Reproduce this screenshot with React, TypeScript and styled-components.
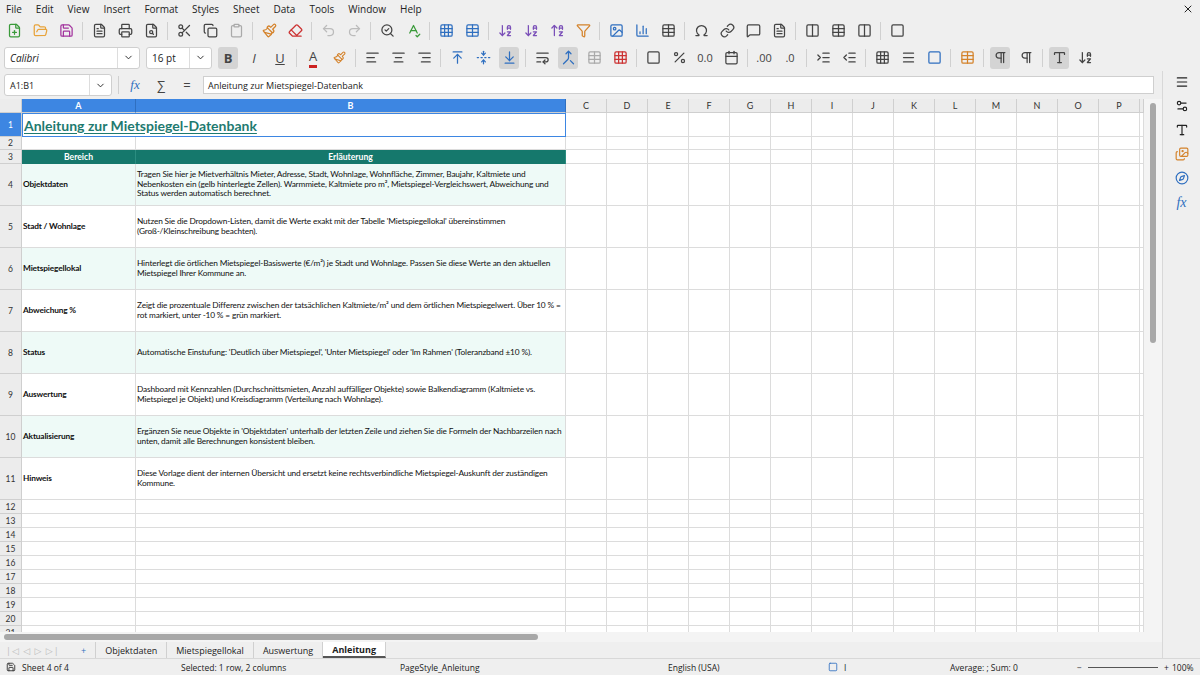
import React from "react";
import styled, { createGlobalStyle } from "styled-components";
import {
  FilePlus, FolderOpen, Save, FileText, Printer, FileSearch, Scissors, Copy, Clipboard,
  Paintbrush, Eraser, Undo2, Redo2, SearchCheck, SpellCheck, Grid3x3, Table, ArrowDownAZ,
  ArrowUpAZ, Filter, Image, BarChart3, Omega, Link, MessageSquare, Columns2,
  AlignLeft, AlignCenter, AlignRight, ArrowUpToLine, FoldVertical, ArrowDownToLine,
  WrapText, Merge, Percent, Calendar, IndentIncrease, IndentDecrease, Square, Menu,
  Settings2, Type, Images, Compass, X, ChevronDown, Pilcrow,
} from "lucide-react";

const Global = createGlobalStyle`
  body { margin: 0; font-family: "Open Sans", "DejaVu Sans", sans-serif; background: #efefef; }
  * { box-sizing: border-box; }
`;

const Window = styled.div`
  width: 1200px; height: 675px; display: flex; flex-direction: column; overflow: hidden;
  background: #efefef; color: #222;
`;
const MenuBar = styled.div`
  height: 17px; display: flex; align-items: center; padding: 0 6px; gap: 14px; font-size: 10px;
`;
const Close = styled.span` margin-left: auto; display: flex; `;
const ToolRow = styled.div`
  height: 27px; display: flex; align-items: center; padding: 0 4px; gap: 6px;
`;
const Tool = styled.span<{ $active?: boolean; $c?: string }>`
  width: 20px; height: 22px; display: inline-flex; align-items: center; justify-content: center;
  border-radius: 3px; color: ${(p) => p.$c || "#444"};
  background: ${(p) => (p.$active ? "#d4d4d4" : "transparent")};
  font-size: 13px;
`;
const Sep = styled.span` width: 1px; height: 18px; background: #d0d0d0; `;
const Combo = styled.div<{ $w: number }>`
  width: ${(p) => p.$w}px; height: 22px; background: #fff; border: 1px solid #cfcfcf; border-radius: 3px;
  display: flex; align-items: center; font-size: 10px; padding-left: 5px; justify-content: space-between;
  font-style: ${(p) => (p.$w > 120 ? "italic" : "normal")};
`;
const ComboArrow = styled.span`
  width: 22px; height: 100%; border-left: 1px solid #ddd; display: flex; align-items: center; justify-content: center;
`;
const FormulaRow = styled.div`
  height: 28px; display: flex; align-items: center; padding: 0 4px; gap: 6px; margin-right: 42px;
`;
const FormulaInput = styled.div`
  flex: 1; height: 18px; background: #fff; border: 1px solid #cfcfcf; font-size: 9px;
  display: flex; align-items: center; padding-left: 4px;
`;
const Main = styled.div` flex: 1; display: flex; min-height: 0; `;
const SheetArea = styled.div` flex: 1; display: flex; flex-direction: column; min-width: 0; `;
const GridWrap = styled.div` flex: 1; display: flex; min-height: 0; `;
const Grid = styled.div`
  flex: 1; display: grid; overflow: hidden; background: #fff;
  grid-template-columns: 22px 114px 430px repeat(14, 41px) 1fr;
  grid-auto-rows: 14px;
  grid-template-rows: 14px 24px 13px 14px repeat(8, 42px);
  font-family: Lato, "Open Sans", sans-serif;
`;
const ColHead = styled.div<{ $sel?: boolean }>`
  background: ${(p) => (p.$sel ? "#3d86e2" : "#ececec")}; color: ${(p) => (p.$sel ? "#fff" : "#333")};
  font-size: 9px; font-weight: ${(p) => (p.$sel ? 700 : 400)}; display: flex; align-items: center; justify-content: center;
  border-right: 1px solid ${(p) => (p.$sel ? "#2f6fc0" : "#cfcfcf")}; border-bottom: 1px solid #cfcfcf;
`;
const RowHead = styled.div<{ $sel?: boolean }>`
  background: ${(p) => (p.$sel ? "#3d86e2" : "#ececec")}; color: ${(p) => (p.$sel ? "#fff" : "#333")};
  font-size: 8.5px; display: flex; align-items: center; justify-content: center;
  border-bottom: 1px solid #cfcfcf; border-right: 1px solid #cfcfcf;
`;
const Cell = styled.div<{ $bg?: string }>`
  background: ${(p) => p.$bg || "#fff"}; border-right: 1px solid #dcdcdc; border-bottom: 1px solid #dcdcdc;
  font-size: 8.3px; letter-spacing: -0.15px; line-height: 9.5px; display: flex; align-items: center; padding: 0 1px; overflow: hidden;
  color: #111;
`;
const Title = styled.div`
  grid-column: 2 / 4; border: 1px solid #3d86e2; font-size: 14px; font-weight: 700; color: #1e7a70;
  text-decoration: underline; text-underline-offset: 2px; display: flex; align-items: center; padding-left: 1px;
`;
const HeadCell = styled.div`
  background: #15786c; color: #fff; font-size: 8.6px; font-weight: 700; display: flex; align-items: center;
  justify-content: center; border-right: 1px solid #2b8d80;
`;
const Label = styled.span` font-weight: 700; `;
const VScroll = styled.div`
  width: 18px; background: #f4f4f4; display: flex; justify-content: center; padding-top: 4px;
`;
const VThumb = styled.div` width: 6px; height: 240px; background: #a8a8a8; border-radius: 3px; `;
const HScroll = styled.div` height: 10px; background: #f4f4f4; padding: 2px 0 2px 4px; `;
const HThumb = styled.div` width: 534px; height: 6px; background: #a8a8a8; border-radius: 3px; `;
const Tabs = styled.div`
  height: 16px; display: flex; align-items: center; font-size: 9px; background: #efefef; padding-left: 6px;
`;
const TabNav = styled.span` color: #bbb; font-size: 9px; width: 66px; letter-spacing: 1px; `;
const Tab = styled.span<{ $active?: boolean }>`
  padding: 0 9px; height: 100%; display: flex; align-items: center; border-right: 1px solid #d0d0d0;
  font-weight: ${(p) => (p.$active ? 700 : 400)};
  border-bottom: ${(p) => (p.$active ? "2px solid #555" : "none")};
  background: ${(p) => (p.$active ? "#fff" : "transparent")};
`;
const Sidebar = styled.div`
  width: 38px; border-left: 1px solid #d8d8d8; display: flex; flex-direction: column; align-items: center;
  gap: 10px; padding-top: 4px; margin-top: -28px;
`;
const Status = styled.div`
  height: 17px; display: flex; align-items: center; font-size: 8.5px; border-top: 1px solid #d8d8d8; padding: 0 6px;
`;
const StatusCell = styled.span<{ $w: number }>` width: ${(p) => p.$w}px; display: flex; align-items: center; gap: 6px; flex-shrink: 0; `;

const cols = ["C", "D", "E", "F", "G", "H", "I", "J", "K", "L", "M", "N", "O", "P"];
const rows: [string, string][] = [
  ["Objektdaten", "Tragen Sie hier je Mietverhältnis Mieter, Adresse, Stadt, Wohnlage, Wohnfläche, Zimmer, Baujahr, Kaltmiete und Nebenkosten ein (gelb hinterlegte Zellen). Warmmiete, Kaltmiete pro m², Mietspiegel-Vergleichswert, Abweichung und Status werden automatisch berechnet."],
  ["Stadt / Wohnlage", "Nutzen Sie die Dropdown-Listen, damit die Werte exakt mit der Tabelle 'Mietspiegellokal' übereinstimmen (Groß-/Kleinschreibung beachten)."],
  ["Mietspiegellokal", "Hinterlegt die örtlichen Mietspiegel-Basiswerte (€/m²) je Stadt und Wohnlage. Passen Sie diese Werte an den aktuellen Mietspiegel Ihrer Kommune an."],
  ["Abweichung %", "Zeigt die prozentuale Differenz zwischen der tatsächlichen Kaltmiete/m² und dem örtlichen Mietspiegelwert. Über 10 % = rot markiert, unter -10 % = grün markiert."],
  ["Status", "Automatische Einstufung: 'Deutlich über Mietspiegel', 'Unter Mietspiegel' oder 'Im Rahmen' (Toleranzband ±10 %)."],
  ["Auswertung", "Dashboard mit Kennzahlen (Durchschnittsmieten, Anzahl auffälliger Objekte) sowie Balkendiagramm (Kaltmiete vs. Mietspiegel je Objekt) und Kreisdiagramm (Verteilung nach Wohnlage)."],
  ["Aktualisierung", "Ergänzen Sie neue Objekte in 'Objektdaten' unterhalb der letzten Zeile und ziehen Sie die Formeln der Nachbarzeilen nach unten, damit alle Berechnungen konsistent bleiben."],
  ["Hinweis", "Diese Vorlage dient der internen Übersicht und ersetzt keine rechtsverbindliche Mietspiegel-Auskunft der zuständigen Kommune."],
];

const I = 15;
const Blank = () => <>{cols.map((c) => <Cell key={c} />)}<Cell /></>;

export default function App() {
  return (
    <Window>
      <Global />
      <MenuBar>
        {["File", "Edit", "View", "Insert", "Format", "Styles", "Sheet", "Data", "Tools", "Window", "Help"].map((m) => <span key={m}>{m}</span>)}
        <Close><X size={12} /></Close>
      </MenuBar>
      <ToolRow>
        <Tool $c="#3a9a3a"><FilePlus size={I} /></Tool>
        <Tool $c="#e8a33a"><FolderOpen size={I} /></Tool>
        <Tool $c="#a3359e"><Save size={I} /></Tool>
        <Sep />
        <Tool><FileText size={I} /></Tool><Tool><Printer size={I} /></Tool><Tool><FileSearch size={I} /></Tool>
        <Sep />
        <Tool><Scissors size={I} /></Tool><Tool><Copy size={I} /></Tool><Tool $c="#aaa"><Clipboard size={I} /></Tool>
        <Sep />
        <Tool $c="#d4822a"><Paintbrush size={I} /></Tool><Tool $c="#c33"><Eraser size={I} /></Tool>
        <Sep />
        <Tool $c="#bbb"><Undo2 size={I} /></Tool><Tool $c="#bbb"><Redo2 size={I} /></Tool>
        <Sep />
        <Tool><SearchCheck size={I} /></Tool><Tool $c="#3a9a3a"><SpellCheck size={I} /></Tool>
        <Sep />
        <Tool $c="#2f6fc0"><Grid3x3 size={I} /></Tool><Tool $c="#2f6fc0"><Table size={I} /></Tool>
        <Sep />
        <Tool $c="#7a4fb8"><ArrowDownAZ size={I} /></Tool><Tool $c="#7a4fb8"><ArrowDownAZ size={I} /></Tool><Tool $c="#7a4fb8"><ArrowUpAZ size={I} /></Tool><Tool $c="#d4822a"><Filter size={I} /></Tool>
        <Sep />
        <Tool $c="#2f6fc0"><Image size={I} /></Tool><Tool $c="#2f6fc0"><BarChart3 size={I} /></Tool><Tool><Table size={I} /></Tool>
        <Sep />
        <Tool><Omega size={I} /></Tool><Tool><Link size={I} /></Tool><Tool><MessageSquare size={I} /></Tool><Tool><FileText size={I} /></Tool>
        <Sep />
        <Tool><Columns2 size={I} /></Tool><Tool><Table size={I} /></Tool><Tool><Columns2 size={I} /></Tool>
        <Sep /><Tool><Square size={I} /></Tool>
      </ToolRow>
      <ToolRow>
        <Combo $w={136}>Calibri<ComboArrow><ChevronDown size={11} /></ComboArrow></Combo>
        <Combo $w={66}>16 pt<ComboArrow><ChevronDown size={11} /></ComboArrow></Combo>
        <Tool $active><b>B</b></Tool><Tool><i>I</i></Tool><Tool><u>U</u></Tool>
        <Sep />
        <Tool $c="#c22"><span style={{ borderBottom: "3px solid #c22", color: "#444" }}>A</span></Tool>
        <Tool $c="#d4822a"><Paintbrush size={13} /></Tool>
        <Sep />
        <Tool><AlignLeft size={I} /></Tool><Tool><AlignCenter size={I} /></Tool><Tool><AlignRight size={I} /></Tool>
        <Sep />
        <Tool $c="#2f6fc0"><ArrowUpToLine size={I} /></Tool><Tool $c="#2f6fc0"><FoldVertical size={I} /></Tool><Tool $active $c="#2f6fc0"><ArrowDownToLine size={I} /></Tool>
        <Sep />
        <Tool><WrapText size={I} /></Tool><Tool $active $c="#2f6fc0"><Merge size={I} /></Tool><Tool $c="#aaa"><Table size={I} /></Tool><Tool $c="#c33"><Grid3x3 size={I} /></Tool>
        <Sep />
        <Tool><Square size={I} /></Tool><Tool><Percent size={I} /></Tool><Tool style={{ fontSize: 11 }}>0.0</Tool><Tool><Calendar size={I} /></Tool>
        <Sep />
        <Tool style={{ fontSize: 11 }}>.00</Tool><Tool style={{ fontSize: 11 }}>.0</Tool>
        <Sep />
        <Tool><IndentIncrease size={I} /></Tool><Tool><IndentDecrease size={I} /></Tool>
        <Sep />
        <Tool><Grid3x3 size={I} /></Tool><Tool><Menu size={I} /></Tool><Tool $c="#2f6fc0"><Square size={I} /></Tool>
        <Sep />
        <Tool $c="#d4822a"><Table size={I} /></Tool>
        <Sep />
        <Tool $active><Pilcrow size={I} /></Tool><Tool><Pilcrow size={I} /></Tool>
        <Sep />
        <Tool $active><Type size={I} /></Tool><Tool><ArrowDownAZ size={I} /></Tool>
      </ToolRow>
      <FormulaRow>
        <Combo $w={108} style={{ fontSize: 9 }}>A1:B1<ComboArrow><ChevronDown size={11} /></ComboArrow></Combo>
        <Sep />
        <Tool $c="#2f6fc0" style={{ fontStyle: "italic", fontFamily: "serif" }}>fx</Tool>
        <Tool>∑</Tool><Tool>=</Tool>
        <FormulaInput>Anleitung zur Mietspiegel-Datenbank</FormulaInput>
      </FormulaRow>
      <Main>
        <SheetArea>
          <GridWrap>
            <Grid>
              <ColHead />
              <ColHead $sel>A</ColHead>
              <ColHead $sel>B</ColHead>
              {cols.map((c) => <ColHead key={c}>{c}</ColHead>)}
              <ColHead />

              <RowHead $sel>1</RowHead>
              <Title>Anleitung zur Mietspiegel-Datenbank</Title>
              <Blank />

              <RowHead>2</RowHead><Cell /><Cell /><Blank />

              <RowHead>3</RowHead>
              <HeadCell>Bereich</HeadCell><HeadCell>Erläuterung</HeadCell>
              <Blank />

              {rows.map(([a, b], i) => {
                const bg = i % 2 === 0 ? "#eefaf7" : "#fff";
                return (
                  <React.Fragment key={a}>
                    <RowHead>{i + 4}</RowHead>
                    <Cell $bg={bg}><Label>{a}</Label></Cell>
                    <Cell $bg={bg}>{b}</Cell>
                    <Blank />
                  </React.Fragment>
                );
              })}
              {Array.from({ length: 10 }, (_, i) => (
                <React.Fragment key={i}>
                  <RowHead>{i + 12}</RowHead><Cell /><Cell /><Blank />
                </React.Fragment>
              ))}
            </Grid>
            <VScroll><VThumb /></VScroll>
          </GridWrap>
          <HScroll><HThumb /></HScroll>
          <Tabs>
            <TabNav>|◁ ◁ ▷ ▷|</TabNav>
            <Tab style={{ color: "#2f6fc0" }}>+</Tab>
            <Tab>Objektdaten</Tab><Tab>Mietspiegellokal</Tab><Tab>Auswertung</Tab><Tab $active>Anleitung</Tab>
          </Tabs>
        </SheetArea>
        <Sidebar>
          <Menu size={14} />
          <Settings2 size={14} />
          <Type size={14} />
          <Images size={14} color="#d4822a" />
          <Compass size={14} color="#2f6fc0" />
          <span style={{ color: "#2f6fc0", fontStyle: "italic", fontFamily: "serif", fontSize: 14 }}>fx</span>
        </Sidebar>
      </Main>
      <Status>
        <StatusCell $w={175}><Save size={10} />Sheet 4 of 4</StatusCell>
        <StatusCell $w={219}>Selected: 1 row, 2 columns</StatusCell>
        <StatusCell $w={268}>PageStyle_Anleitung</StatusCell>
        <StatusCell $w={160}>English (USA)</StatusCell>
        <StatusCell $w={122}><Square size={10} color="#2f6fc0" />I</StatusCell>
        <StatusCell $w={127}>Average: ; Sum: 0</StatusCell>
        <StatusCell $w={95}>−<span style={{ width: 70, height: 1, background: "#555" }} />+</StatusCell>
        <span>100%</span>
      </Status>
    </Window>
  );
}
